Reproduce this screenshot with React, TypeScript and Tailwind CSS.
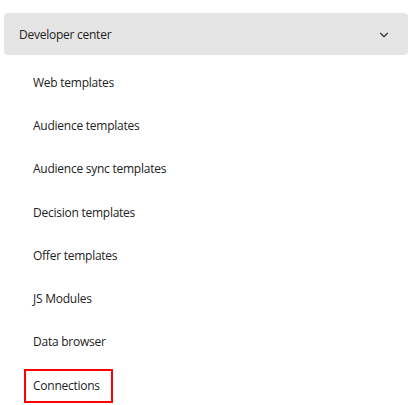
import { ChevronDown } from "lucide-react"

const items = [
  "Web templates",
  "Audience templates",
  "Audience sync templates",
  "Decision templates",
  "Offer templates",
  "JS Modules",
  "Data browser",
  "Connections",
]

const App = () => {
  return (
    <div className="w-[415px] h-[405px] bg-white pt-[13px] pl-[4px] overflow-hidden text-[#222] text-[12px] tracking-[-0.25px]" style={{ fontFamily: '"Open Sans", "Noto Sans", sans-serif' }}>
      <div className="w-[404px] h-[42px] rounded-[4px] bg-[#e5e5e5] flex items-center justify-between pl-[15px] pr-[17px] pt-[1px]">
        <span>Developer center</span>
        <ChevronDown className="w-[14px] h-[14px] text-[#333]" strokeWidth={2} />
      </div>
      <div className="flex flex-col pt-[6px]">
        {items.map((item) => (
          <div key={item} className="h-[43.3px] flex items-center pl-[20px]">
            <span
              className={
                item === "Connections"
                  ? "h-[34px] w-[89px] border-2 border-[#f00] flex items-center pl-[7px]"
                  : "h-[34px] flex items-center pl-[7px] border-2 border-transparent"
              }
            >
              {item}
            </span>
          </div>
        ))}
      </div>
    </div>
  )
}

export default App
